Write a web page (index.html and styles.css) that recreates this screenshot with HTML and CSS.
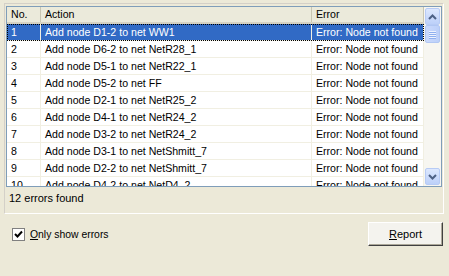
FILE: index.html
```html
<!DOCTYPE html>
<html lang="en">
<head>
    <meta charset="UTF-8">
    <title>Errors</title>
    <link rel="stylesheet" href="styles.css">
</head>
<body>
    <div class="frame">
        <div class="list">
            <div class="grid">
                <div class="head">
                    <div class="col c-no">No.</div>
                    <div class="col c-act">Action</div>
                    <div class="col c-err">Error</div>
                </div>
                <div class="rows">
                    <div class="row sel"><div class="col c-no">1</div><div class="col c-act">Add node D1-2 to net WW1</div><div class="col c-err">Error: Node not found</div></div>
                    <div class="row"><div class="col c-no">2</div><div class="col c-act">Add node D6-2 to net NetR28_1</div><div class="col c-err">Error: Node not found</div></div>
                    <div class="row"><div class="col c-no">3</div><div class="col c-act">Add node D5-1 to net NetR22_1</div><div class="col c-err">Error: Node not found</div></div>
                    <div class="row"><div class="col c-no">4</div><div class="col c-act">Add node D5-2 to net FF</div><div class="col c-err">Error: Node not found</div></div>
                    <div class="row"><div class="col c-no">5</div><div class="col c-act">Add node D2-1 to net NetR25_2</div><div class="col c-err">Error: Node not found</div></div>
                    <div class="row"><div class="col c-no">6</div><div class="col c-act">Add node D4-1 to net NetR24_2</div><div class="col c-err">Error: Node not found</div></div>
                    <div class="row"><div class="col c-no">7</div><div class="col c-act">Add node D3-2 to net NetR24_2</div><div class="col c-err">Error: Node not found</div></div>
                    <div class="row"><div class="col c-no">8</div><div class="col c-act">Add node D3-1 to net NetShmitt_7</div><div class="col c-err">Error: Node not found</div></div>
                    <div class="row"><div class="col c-no">9</div><div class="col c-act">Add node D2-2 to net NetShmitt_7</div><div class="col c-err">Error: Node not found</div></div>
                    <div class="row"><div class="col c-no">10</div><div class="col c-act">Add node D4-2 to net NetD4_2</div><div class="col c-err">Error: Node not found</div></div>
                </div>
            </div>
            <div class="scroll">
                <div class="sb-btn">
                    <svg width="9" height="6" viewBox="0 0 9 6"><path d="M1 5 L4.5 1.5 L8 5" fill="none" stroke="#4d6185" stroke-width="2"/></svg>
                </div>
                <div class="sb-thumb">
                    <span></span><span></span><span></span><span></span>
                </div>
                <div class="sb-track"></div>
                <div class="sb-btn">
                    <svg width="9" height="6" viewBox="0 0 9 6"><path d="M1 1 L4.5 4.5 L8 1" fill="none" stroke="#4d6185" stroke-width="2"/></svg>
                </div>
            </div>
        </div>
        <div class="status">12 errors found</div>
    </div>
    <div class="bottom">
        <label class="check">
            <span class="box">
                <svg width="9" height="9" viewBox="0 0 9 9"><path d="M1 4 L3.5 6.5 L8 1.5" fill="none" stroke="#000" stroke-width="2"/></svg>
            </span>
            <span><u>O</u>nly show errors</span>
        </label>
        <button class="btn"><u>R</u>eport</button>
    </div>
</body>
</html>
```

FILE: styles.css
```css
*{
    box-sizing: border-box;
}
body{
    margin: 0;
    width: 449px;
    height: 276px;
    background: #ece9d8;
    font-family: "Liberation Sans", Arial, sans-serif;
    font-size: 10.6px;
    color: #000;
    overflow: hidden;
}
.frame{
    margin: 3px 5px 0 4px;
    padding: 2px 1px 2px 1px;
    border: 1px solid;
    border-color: #d4d0c8 #fff #fff #d4d0c8;
}
.list{
    display: flex;
    height: 181px;
    background: #fff;
    border: 1px solid #7f9db9;
    overflow: hidden;
}
.grid{
    flex: 1;
    overflow: hidden;
}
.head{
    display: flex;
    height: 17px;
    background: #ebeadb;
    border-bottom: 2px solid #d6d2c2;
}
.head .col{
    line-height: 15px;
    border-right: 1px solid #c7c5b2;
}
.col{
    padding-left: 4px;
    white-space: nowrap;
    overflow: hidden;
}
.c-no{ width: 34px; }
.c-act{ width: 271px; }
.c-err{ flex: 1; }
.row{
    display: flex;
    height: 17px;
    line-height: 16px;
    border-bottom: 1px solid #f1efe2;
}
.row .col{
    border-right: 1px solid #f1efe2;
}
.row.sel{
    background: #316ac5;
    color: #fff;
    outline: 1px dotted #000;
    outline-offset: -1px;
}
.scroll{
    width: 17px;
    display: flex;
    flex-direction: column;
    background: #f7f6f1;
    padding: 1px 0;
}
.sb-btn{
    height: 17px;
    margin: 0 1px;
    display: flex;
    align-items: center;
    justify-content: center;
    background: linear-gradient(#dde8fe, #bcd0f9);
    border: 1px solid #b7cbf5;
    border-radius: 2px;
}
.sb-thumb{
    height: 18px;
    margin: 0 1px;
    display: flex;
    flex-direction: column;
    align-items: center;
    justify-content: center;
    gap: 1px;
    background: linear-gradient(90deg, #cad9fc, #bcd0f9);
    border: 1px solid #b1c7f3;
    border-radius: 2px;
}
.sb-thumb span{
    width: 7px;
    height: 1px;
    background: #eef3fe;
    box-shadow: 0 1px 0 #8fb0ef;
}
.sb-track{
    flex: 1;
}
.status{
    height: 24px;
    line-height: 22px;
    padding-left: 3px;
    font-size: 11px;
}
.bottom{
    display: flex;
    align-items: center;
    justify-content: space-between;
    padding: 8px 6px 0 12px;
}
.check{
    display: flex;
    align-items: center;
    gap: 5px;
    font-size: 10.4px;
}
.box{
    width: 13px;
    height: 13px;
    border: 1px solid #808080;
    background: #fff;
    display: flex;
    align-items: center;
    justify-content: center;
}
.btn{
    width: 75px;
    height: 24px;
    font: inherit;
    font-size: 11px;
    background: #f4f3ee;
    border: 1px solid;
    border-color: #fff #404040 #404040 #fff;
    box-shadow: inset -1px -1px 0 #aca899;
}
```
